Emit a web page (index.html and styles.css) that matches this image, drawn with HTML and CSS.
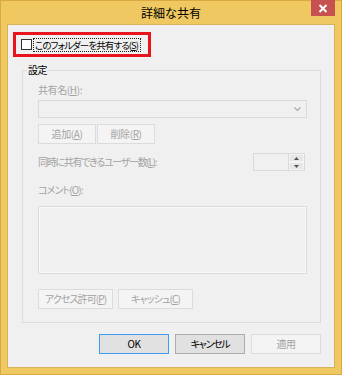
FILE: index.html
```html
<!DOCTYPE html>
<html lang="ja">
<head>
<meta charset="utf-8">
<title>詳細な共有</title>
<link rel="stylesheet" href="styles.css">
</head>
<body>
<div class="window">
  <div class="titlebar">
    <div class="title">詳細な共有</div>
    <div class="close">
      <svg width="10" height="9" viewBox="0 0 10 9"><path d="M1.5 1 L8.5 8 M8.5 1 L1.5 8" stroke="#fff" stroke-width="2" fill="none"/></svg>
    </div>
  </div>
  <div class="client">
    <div class="highlight">
      <span class="checkbox"></span>
      <span class="focus">このフォルダーを共有する(<u>S</u>)</span>
    </div>
    <div class="group">
      <div class="legend">設定</div>
      <div class="label first">共有名(<u>H</u>):</div>
      <div class="combo">
        <svg width="7" height="5" viewBox="0 0 7 5"><path d="M0.5 0.5 L3.5 3.5 L6.5 0.5" stroke="#a8a8a8" stroke-width="1.2" fill="none"/></svg>
      </div>
      <div class="btnrow row1">
        <div class="btn disabled small">追加(<u>A</u>)</div>
        <div class="btn disabled small">削除(<u>R</u>)</div>
      </div>
      <div class="spinrow">
        <div class="label kana-tight">同時に共有できるユーザー数(<u>L</u>):</div>
        <div class="spin">
          <div class="spinfield"></div>
          <div class="spinbtns">
            <div class="spinbtn"><svg width="5" height="3" viewBox="0 0 5 3"><path d="M0 3 L2.5 0 L5 3 Z" fill="#555"/></svg></div>
            <div class="spinbtn"><svg width="5" height="3" viewBox="0 0 5 3"><path d="M0 0 L2.5 3 L5 0 Z" fill="#555"/></svg></div>
          </div>
        </div>
      </div>
      <div class="label comment kana-mid">コメント(<u>O</u>):</div>
      <div class="textarea"></div>
      <div class="btnrow row2">
        <div class="btn disabled perm kana-mid">アクセス許可(<u>P</u>)</div>
        <div class="btn disabled perm kana-mid">キャッシュ(<u>C</u>)</div>
      </div>
    </div>
    <div class="footer">
      <div class="btn default">OK</div>
      <div class="btn kana-tight">キャンセル</div>
      <div class="btn disabled">適用</div>
    </div>
  </div>
</div>
</body>
</html>
```

FILE: styles.css
```css
* { box-sizing: border-box; }
html, body { margin: 0; padding: 0; }
body {
  width: 342px;
  height: 375px;
  font-family: "Noto Sans CJK JP", "Noto Sans", sans-serif;
  font-feature-settings: "palt";
  font-size: 10px;
  letter-spacing: -0.4px;
  color: #000;
}
.window {
  width: 342px;
  height: 375px;
  background: #efc862;
  box-shadow: inset 0 0 0 1px #d9aa42;
  padding: 0 7px 7px 7px;
  display: flex;
  flex-direction: column;
}
.titlebar {
  height: 24px;
  display: grid;
  grid-template-columns: 1fr auto 1fr;
}
.title {
  grid-column: 2;
  font-size: 12px;
  letter-spacing: 0;
  line-height: 25px;
  color: #000;
}
.close {
  grid-column: 3;
  justify-self: end;
  width: 24px;
  height: 16px;
  background: #c75050;
  display: flex;
  align-items: center;
  justify-content: center;
}
.client {
  height: 344px;
  background: #f0f0f0;
  border: 1px solid #d8b258;
  display: flex;
  flex-direction: column;
  align-items: flex-start;
}
.highlight {
  margin: 7px 0 0 5px;
  width: 138px;
  height: 25px;
  border: 3px solid #e8141d;
  display: flex;
  align-items: center;
  padding-left: 5px;
  white-space: nowrap;
  overflow: hidden;
}
.checkbox {
  flex: none;
  width: 11px;
  height: 11px;
  border: 1px solid #333;
  background: #fff;
}
.focus {
  flex: none;
  margin-left: 1px;
  border: 1px dotted #222;
  font-size: 9.5px;
  letter-spacing: -0.9px;
  line-height: 12px;
  padding: 0 2px 0 1px;
  white-space: nowrap;
}
.group {
  margin: 13px 0 0 14px;
  width: 299px;
  border: 1px solid #dcdcdc;
  padding: 0 13px 13px 15px;
  display: flex;
  flex-direction: column;
  align-items: flex-start;
}
.legend {
  margin: -8px 0 0 -11px;
  height: 14px;
  line-height: 14px;
  padding: 0 1px;
  background: #f0f0f0;
  color: #000;
}
.label {
  color: #a3a3a3;
  line-height: 12px;
  white-space: nowrap;
}
.kana-tight { letter-spacing: -1.3px; }
.kana-mid { letter-spacing: -0.9px; }
.label.first { margin-top: 7px; }
.combo {
  margin-top: 4px;
  width: 269px;
  height: 18px;
  border: 1px solid #dadada;
  background: #f0f0f0;
  display: flex;
  justify-content: flex-end;
  align-items: center;
  padding-right: 5px;
}
.btnrow {
  display: flex;
}
.row1 { margin-top: 6px; gap: 1px; }
.row2 { margin-top: 15px; gap: 5px; }
.btn {
  height: 20px;
  width: 70px;
  border: 1px solid #acacac;
  background: #e1e1e1;
  display: flex;
  align-items: center;
  justify-content: center;
  color: #000;
  line-height: 12px;
  white-space: nowrap;
}
.btn.default { border-color: #3f9bf0; }
.btn.disabled {
  border-color: #dcdcdc;
  background: #f4f4f4;
  color: #a3a3a3;
}
.btn.small { width: 58px; }
.btn.perm { width: 75px; }
.spinrow {
  margin-top: 9px;
  width: 100%;
  height: 18px;
  display: flex;
  align-items: center;
  justify-content: space-between;
  padding-right: 2px;
}
.spin {
  width: 52px;
  height: 18px;
  border: 1px solid #dadada;
  display: flex;
  background: #f0f0f0;
}
.spinfield { flex: 1; }
.spinbtns {
  width: 16px;
  display: flex;
  flex-direction: column;
  border-left: 1px solid #dadada;
}
.spinbtn {
  flex: 1;
  background: #e6e6e6;
  border: 1px solid #f4f4f4;
  display: flex;
  align-items: center;
  justify-content: center;
}
.label.comment { margin-top: 13px; }
.textarea {
  margin-top: 10px;
  width: 269px;
  height: 68px;
  border: 1px solid #dadada;
  box-shadow: inset 0 0 0 1px #fbfbfb;
  background: #f0f0f0;
}
.footer {
  margin-top: 11px;
  width: 100%;
  display: flex;
  justify-content: flex-end;
  gap: 6px;
  padding-right: 13px;
}
```
